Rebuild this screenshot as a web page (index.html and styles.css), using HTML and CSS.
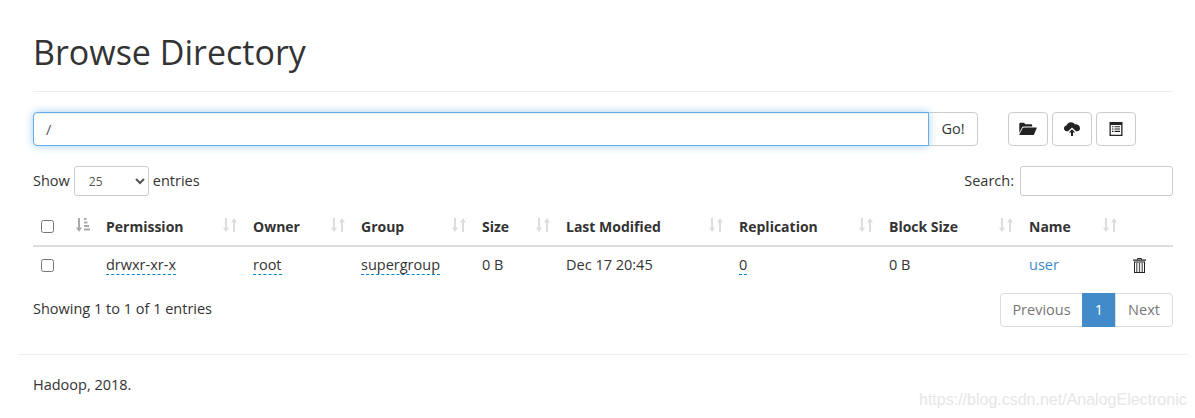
FILE: index.html
```html
<!DOCTYPE html>
<html lang="en">
<head>
<meta charset="utf-8">
<title>Browse Directory</title>
<link rel="stylesheet" href="styles.css">
</head>
<body>
<svg class="defs" width="0" height="0" aria-hidden="true">
  <symbol id="sort" viewBox="0 0 14 14">
    <path d="M2 0h2v9.500h2L3 14 0 9.500h2z"/>
    <path d="M10 14h2V4.500h2L11 0 8 4.500h2z"/>
  </symbol>
</svg>
<div class="container">
  <header class="page-header"><h1>Browse Directory</h1></header>
  <div class="path-row">
    <div class="input-group">
      <input class="path-input" type="text" value="/">
      <button class="btn go-btn">Go!</button>
    </div>
    <div class="tools">
      <button class="btn tool-btn"><svg class="tool-icon folder-icon" viewBox="0 0 18 14"><path d="M.3 11V2.200C.3 1.300 1 .8 1.700.8h3.400l1.200 1.500h5.800c.7 0 1.100.5 1.100 1.100v1H4.600c-.8 0-1.300.4-1.600 1zM3.700 6c.2-.4.600-.6 1-.6h12.700c.4 0 .5.300.4.600l-2.800 6.500c-.2.400-.5.600-.9.600H.8c-.4 0-.5-.3-.4-.6z"/></svg></button>
      <button class="btn tool-btn"><svg class="tool-icon" viewBox="0 0 16 14"><path d="M4 9.300H3.300C1.500 9.300 0 8 0 6.400c0-1.500 1-2.600 2.500-2.900C3 1.600 4.800.2 7 .2c1.700 0 3.100.9 3.900 2.200 2.700-.3 5.100 1.500 5.100 3.800 0 1.600-1.100 3.100-3.300 3.100H12L8 5.500z"/><path d="M8 7.300l3.200 3.200H9v3.500H7v-3.500H4.800z"/></svg></button>
      <button class="btn tool-btn"><svg class="tool-icon" viewBox="0 0 14 14"><path fill-rule="evenodd" d="M.5 0h13v14H.5zM1.800 3v9.800h10.400V3z"/><path d="M3 4.200h1.500v1.100H3zM5.500 4.200H11v1.100H5.500zM3 6.500h1.500v1.100H3zM5.500 6.500H11v1.100H5.500zM3 8.800h1.500v1.100H3zM5.500 8.800H11v1.100H5.500z"/></svg></button>
    </div>
  </div>
  <div class="table-controls">
    <label class="control-label">Show
      <select class="length-select"><option>25</option></select>
      entries</label>
    <label class="control-label">Search:
      <input class="search-input" type="search"></label>
  </div>
  <table class="files">
    <colgroup>
      <col class="c-check"><col class="c-perm"><col class="c-owner"><col class="c-group"><col class="c-size"><col class="c-mod"><col class="c-rep"><col class="c-block"><col class="c-name"><col class="c-del">
    </colgroup>
    <thead>
      <tr>
        <th class="sortable"><input class="check" type="checkbox"><svg class="sort-icon sorted" viewBox="0 0 14 14"><path d="M2 0h2v9.500h2L3 14 0 9.500h2z"/><path d="M8 0h2.500v2H8zM8 3.500h3.500v2H8zM8 7h5v2H8zM8 10.500h6v2H8z"/></svg></th>
        <th class="sortable">Permission<svg class="sort-icon"><use href="#sort"/></svg></th>
        <th class="sortable">Owner<svg class="sort-icon"><use href="#sort"/></svg></th>
        <th class="sortable">Group<svg class="sort-icon"><use href="#sort"/></svg></th>
        <th class="sortable">Size<svg class="sort-icon"><use href="#sort"/></svg></th>
        <th class="sortable">Last Modified<svg class="sort-icon"><use href="#sort"/></svg></th>
        <th class="sortable">Replication<svg class="sort-icon"><use href="#sort"/></svg></th>
        <th class="sortable">Block Size<svg class="sort-icon"><use href="#sort"/></svg></th>
        <th class="sortable">Name<svg class="sort-icon"><use href="#sort"/></svg></th>
        <th></th>
      </tr>
    </thead>
    <tbody>
      <tr>
        <td><input class="check" type="checkbox"></td>
        <td><span class="editable">drwxr-xr-x</span></td>
        <td><span class="editable">root</span></td>
        <td><span class="editable">supergroup</span></td>
        <td>0 B</td>
        <td>Dec 17 20:45</td>
        <td><span class="editable">0</span></td>
        <td>0 B</td>
        <td><a class="link">user</a></td>
        <td><svg class="trash" viewBox="0 0 13 15"><path d="M4.500 0h4l.6 1.500H13v1.300H0V1.500h3.900zM5 .9l-.2.6h3.400L8 .9z" fill-rule="evenodd"/><path fill-rule="evenodd" d="M1 3.600h11V15H1zM2 4.500v9.500h9V4.500z"/><path class="trash-bar" d="M3.200 4.500h1.200v9.500H3.200zM5.900 4.500h1.200v9.500H5.900zM8.600 4.500h1.200v9.500H8.600z"/></svg></td>
      </tr>
    </tbody>
  </table>
  <div class="table-footer">
    <div>Showing 1 to 1 of 1 entries</div>
    <nav class="pagination">
      <a class="page page-first">Previous</a>
      <a class="page page-active">1</a>
      <a class="page page-last">Next</a>
    </nav>
  </div>
  <hr class="footer-rule">
  <footer class="site-footer">Hadoop, 2018.</footer>
</div>
<div class="watermark">https://blog.csdn.net/AnalogElectronic</div>
</body>
</html>
```
FILE: styles.css
```css
* { box-sizing: border-box; }
html, body { margin: 0; padding: 0; }
body {
  width: 1195px;
  height: 418px;
  overflow: hidden;
  position: relative;
  background: #fff;
  color: #333;
  font-family: "Open Sans", "Noto Sans", sans-serif;
  font-size: 14.5px;
  line-height: 20px;
}
.defs { position: absolute; }
.container { width: 1170px; margin-left: 18px; padding: 0 15px; }
.page-header { height: 92px; border-bottom: 1px solid #eee; padding-top: 32px; }
.page-header h1 { margin: 0; font-size: 34px; font-weight: 400; line-height: 40px; color: #333; }
.path-row { display: flex; margin-top: 20px; }
.input-group { display: flex; width: 945px; height: 34px; }
.path-input {
  flex: 1;
  height: 34px;
  padding: 6px 12px;
  border: 1px solid #66afe9;
  border-radius: 4px 0 0 4px;
  box-shadow: inset 0 1px 1px rgba(0,0,0,.075), 0 0 8px rgba(102,175,233,.6);
  font: inherit;
  color: #555;
  outline: none;
  position: relative;
}
.btn {
  display: flex;
  align-items: center;
  justify-content: center;
  height: 34px;
  background: #fff;
  border: 1px solid #ccc;
  border-radius: 4px;
  font: inherit;
  color: #333;
  padding: 0;
}
.go-btn { width: 50px; margin-left: -1px; border-radius: 0 4px 4px 0; }
.tools { display: flex; gap: 4px; margin-left: 30px; }
.tool-btn { width: 40px; }
.tool-icon { width: 16px; height: 14px; fill: #222; }
.folder-icon { width: 18px; }
.table-controls { display: flex; justify-content: space-between; margin-top: 20px; height: 30px; line-height: 28px; }
.control-label { display: flex; align-items: center; gap: 4px; }
.length-select {
  width: 75px;
  height: 30px;
  padding: 0 10px;
  background: #fff;
  border: 1px solid #ccc;
  border-radius: 3px;
  font: inherit;
  font-size: 12px;
  color: #555;
  margin: 0;
}
.search-input { width: 153px; height: 30px; border: 1px solid #ccc; border-radius: 3px; margin-left: 2px; }
.files { width: 1140px; table-layout: fixed; border-collapse: collapse; margin-top: 12px; }
.c-check { width: 65px; } .c-perm { width: 147px; } .c-owner { width: 108px; } .c-group { width: 121px; }
.c-size { width: 84px; } .c-mod { width: 173px; } .c-rep { width: 150px; } .c-block { width: 140px; }
.c-name { width: 104px; } .c-del { width: 48px; }
.files th { position: relative; padding: 8px; height: 38px; font-size: 14px; font-weight: 700; text-align: left; border-bottom: 2px solid #ddd; white-space: nowrap; }
.files td { padding: 8px; height: 37px; white-space: nowrap; }
.check { margin: 0; width: 13px; height: 13px; display: block; }
.sort-icon { position: absolute; right: 8px; top: 10px; width: 14px; height: 14px; fill: #ddd; }
.sort-icon.sorted { fill: #aaa; }
.editable { color: #333; border-bottom: 1px dashed #08c; display: inline-block; line-height: 19px; }
.link { color: #428bca; }
.trash { width: 13px; height: 15px; fill: #222; display: block; }
.trash-bar { fill: #555; }
.table-footer { display: flex; justify-content: space-between; margin-top: 10px; }
.table-footer > div { padding-top: 6px; }
.pagination { display: flex; height: 34px; }
.page { display: flex; align-items: center; justify-content: center; border: 1px solid #ddd; margin-left: -1px; color: #777; }
.page-first { width: 83px; border-radius: 4px 0 0 4px; }
.page-active { width: 34px; background: #428bca; border-color: #428bca; color: #fff; }
.page-last { width: 58px; border-radius: 0 4px 4px 0; }
.footer-rule { width: 1170px; margin: 27px 0 0 -15px; border: 0; border-top: 1px solid #eee; }
.site-footer { margin-top: 20px; }
.watermark {
  position: absolute;
  left: 919px;
  top: 390px;
  font-family: "Liberation Sans", sans-serif;
  font-size: 16px;
  line-height: 20px;
  color: #e6e6e6;
  white-space: nowrap;
}
```
